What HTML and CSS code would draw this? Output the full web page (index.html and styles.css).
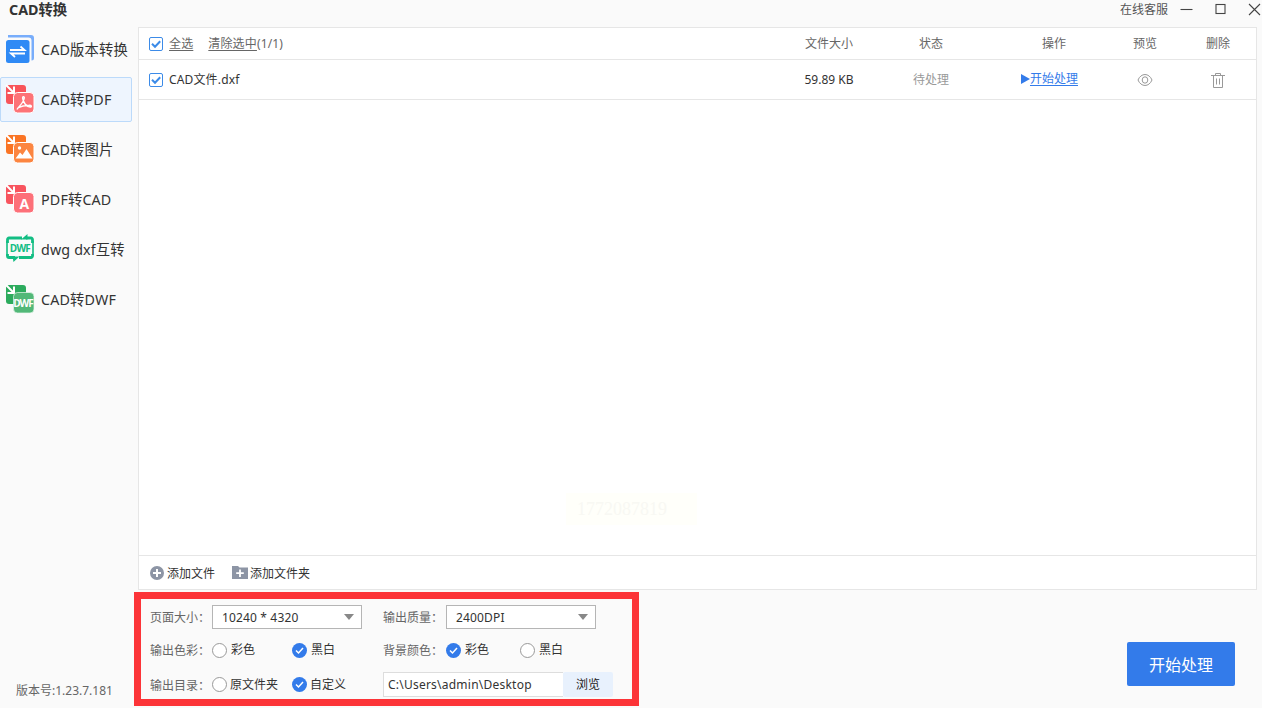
FILE: index.html
```html
<!DOCTYPE html>
<html lang="zh-CN">
<head>
  <meta charset="UTF-8">
  <meta name="viewport" content="width=device-width, initial-scale=1">
  <title>CAD转换</title>
  <link rel="stylesheet" href="styles.css">
</head>
<body>
  <header class="titlebar">
    <h1>CAD转换</h1>
    <span class="service">在线客服</span>
    <svg class="win-btn" width="13" height="13" viewBox="0 0 13 13"><path d="M0.5 6.5h12"/></svg>
    <svg class="win-btn" width="13" height="13" viewBox="0 0 13 13"><rect x="2" y="1.5" width="9" height="9"/></svg>
    <svg class="win-btn" width="13" height="13" viewBox="0 0 13 13"><path d="M1 1l11 11M12 1L1 12"/></svg>
  </header>

  <div class="layout">
    <aside class="sidebar">
      <nav class="menu">
        <a class="menu-item">
          <svg width="28" height="28" viewBox="0 0 28 28">
            <path d="M2 0h23a3 3 0 0 1 3 3v20a2.500 2.500 0 0 1-2.500 2.500V5.500a3 3 0 0 0-3-3H2z" fill="#78adfb"/>
            <rect x="0" y="5" width="23.5" height="23" rx="2.5" fill="#2f8af5"/>
            <path d="M4 15h14.500l-4-3.500M19 18.500H5l4 3.500" fill="none" stroke="#fff" stroke-width="1.8"/>
          </svg>
          <span>CAD版本转换</span>
        </a>
        <a class="menu-item active">
          <svg width="28" height="28" viewBox="0 0 28 28">
            <rect width="20" height="19" rx="3" fill="#f8545a"/>
            <path d="M0 0l7 7M8 1.500V8H1.500" fill="none" stroke="#fff" stroke-width="2"/>
            <rect x="7.500" y="7.500" width="20.500" height="20.500" rx="4" fill="#fd7377" stroke="#fff"/>
            <path d="M11 24.500c2-3.500 6.500-6.500 7.300-11.500.2-2-2.200-1.600-1.600.5 1 4.500 3.500 8 7.500 8.500 2 0 1.300-2-1-1.800-4 .1-8 .8-11.500 2.600" fill="none" stroke="#fff" stroke-width="1.400"/>
          </svg>
          <span>CAD转PDF</span>
        </a>
        <a class="menu-item">
          <svg width="28" height="28" viewBox="0 0 28 28">
            <rect width="20" height="19" rx="3" fill="#fa7424"/>
            <path d="M0 0l7 7M8 1.500V8H1.500" fill="none" stroke="#fff" stroke-width="2"/>
            <rect x="7.500" y="7.500" width="20.500" height="20.500" rx="4" fill="#fc8540" stroke="#fff"/>
            <circle cx="13.500" cy="13" r="1.700" fill="#fff"/>
            <path d="M9.500 23.500l4.500-6 2.500 2.500 4-6 6 9.500z" fill="#fff"/>
          </svg>
          <span>CAD转图片</span>
        </a>
        <a class="menu-item">
          <svg width="28" height="28" viewBox="0 0 28 28">
            <rect width="20" height="19" rx="3" fill="#f8545e"/>
            <path d="M0 0l7 7M8 1.500V8H1.500" fill="none" stroke="#fff" stroke-width="2"/>
            <rect x="7.500" y="7.500" width="20.500" height="20.500" rx="4" fill="#fd7079" stroke="#fff"/>
            <text class="icon-a" x="18.300" y="24" text-anchor="middle">A</text>
          </svg>
          <span>PDF转CAD</span>
        </a>
        <a class="menu-item">
          <svg width="28" height="28" viewBox="0 0 28 28">
            <path d="M1.500 8V4.500a1.500 1.500 0 0 1 1.500-1.500h13M20 3h5a1.500 1.500 0 0 1 1.500 1.500V8M1.500 19v2A1.500 1.500 0 0 0 3 22.500h6M13 22.500h12a1.500 1.500 0 0 0 1.500-1.500v-2" fill="none" stroke="#12bd83" stroke-width="2.800"/>
            <path d="M1 6v15M27 6v15" stroke="#12bd83" stroke-width="1.600"/>
            <path d="M15 4.400L21.500-1v5.400zM6.500 21.500h7L7.500 27z" fill="#12bd83"/>
            <text class="icon-dwf green" x="14.300" y="16.500" text-anchor="middle" textLength="21">DWF</text>
          </svg>
          <span>dwg dxf互转</span>
        </a>
        <a class="menu-item">
          <svg width="28" height="28" viewBox="0 0 28 28">
            <rect width="20" height="19" rx="3" fill="#2cab5d"/>
            <path d="M0 0l7 7M8 1.500V8H1.500" fill="none" stroke="#fff" stroke-width="2"/>
            <rect x="7.500" y="7.500" width="20.500" height="20.500" rx="4" fill="#52b878" stroke="#e9f7ee" stroke-width=".7"/>
            <text class="icon-dwf" x="17.500" y="22" text-anchor="middle" textLength="20.500">DWF</text>
          </svg>
          <span>CAD转DWF</span>
        </a>
      </nav>
      <p class="version">版本号:1.23.7.181</p>
    </aside>

    <main class="main">
      <section class="files">
        <div class="row head">
          <div class="cell name">
            <svg class="check" width="14" height="14" viewBox="0 0 14 14"><rect x=".5" y=".5" width="13" height="13" rx="1.500"/><path d="M3 6.700l3 3 5.200-5.500"/></svg>
            <u>全选</u>
            <span class="clear"><u>清除选中</u>(1/1)</span>
          </div>
          <div class="cell">文件大小</div>
          <div class="cell">状态</div>
          <div class="cell">操作</div>
          <div class="cell">预览</div>
          <div class="cell">删除</div>
        </div>
        <div class="row item">
          <div class="cell name">
            <svg class="check" width="14" height="14" viewBox="0 0 14 14"><rect x=".5" y=".5" width="13" height="13" rx="1.500"/><path d="M3 6.700l3 3 5.200-5.500"/></svg>
            <span>CAD文件.dxf</span>
          </div>
          <div class="cell">59.89 KB</div>
          <div class="cell waiting">待处理</div>
          <div class="cell start">
            <svg width="9" height="10" viewBox="0 0 9 10"><path d="M0 0l9 5-9 5z" fill="#337bea"/></svg>
            <u>开始处理</u>
          </div>
          <div class="cell">
            <svg class="gray-icon" width="16" height="14" viewBox="0 0 16 14"><path d="M1 7c3-7.300 11-7.300 14 0-3 7.300-11 7.300-14 0z"/><ellipse cx="8" cy="7" rx="2.800" ry="3.200"/></svg>
          </div>
          <div class="cell">
            <svg class="gray-icon" width="14" height="16" viewBox="0 0 14 16"><path d="M0 3.500h14M4.500 3.500v-2h5v2M2.500 3.500v12h9v-12M5.500 6.500v6M8.500 6.500v6"/></svg>
          </div>
        </div>
        <div class="list">
          <div class="mark">1772087819</div>
        </div>
        <div class="toolbar">
          <span class="tool">
            <svg width="14" height="14" viewBox="0 0 14 14"><circle cx="7" cy="7" r="7" fill="#8d95a5"/><path d="M7 3v8M3 7h8" stroke="#fff" stroke-width="2"/></svg>
            <span>添加文件</span>
          </span>
          <span class="tool folder">
            <svg width="16" height="13" viewBox="0 0 16 13"><path d="M0 0h6l1.500 1.500H16V13H0z" fill="#8d95a5"/><path d="M8 3.500v7.500M4.200 7.200h7.600" stroke="#fff" stroke-width="1.800"/></svg>
            <span>添加文件夹</span>
          </span>
        </div>
      </section>

      <section class="settings">
        <div class="form">
          <label>页面大小：</label>
          <div class="select"><span>10240 * 4320</span><i class="arrow"></i></div>
          <label>输出质量：</label>
          <div class="select"><span>2400DPI</span><i class="arrow"></i></div>

          <label>输出色彩：</label>
          <div class="radios">
            <span class="radio"><i class="dot"></i>彩色</span>
            <span class="radio"><i class="dot on"><svg width="15" height="15" viewBox="0 0 15 15"><path d="M4 7.500l2.500 2.500 4.500-5"/></svg></i>黑白</span>
          </div>
          <label>背景颜色：</label>
          <div class="radios narrow">
            <span class="radio"><i class="dot on"><svg width="15" height="15" viewBox="0 0 15 15"><path d="M4 7.500l2.500 2.500 4.500-5"/></svg></i>彩色</span>
            <span class="radio"><i class="dot"></i>黑白</span>
          </div>

          <label>输出目录：</label>
          <div class="radios last">
            <span class="radio"><i class="dot"></i>原文件夹</span>
            <span class="radio"><i class="dot on"><svg width="15" height="15" viewBox="0 0 15 15"><path d="M4 7.500l2.500 2.500 4.500-5"/></svg></i>自定义</span>
          </div>
          <div class="path">
            <div class="path-text">C:\Users\admin\Desktop</div>
            <button class="browse">浏览</button>
          </div>
        </div>
        <button class="submit">开始处理</button>
        <div class="highlight"></div>
      </section>
    </main>
  </div>
</body>
</html>
```
FILE: styles.css
```css
* {
  box-sizing: border-box;
}
body {
  margin: 0;
  width: 1262px;
  height: 708px;
  overflow: hidden;
  background: #fafafa;
  color: #333;
  font-family: "Noto Sans", "Noto Sans CJK SC", sans-serif;
  font-size: 12px;
  line-height: 18px;
  display: flex;
  flex-direction: column;
}
h1, p {
  margin: 0;
}
u {
  text-underline-offset: 2px;
}
svg {
  display: block;
  flex: none;
  overflow: visible;
}
button {
  border: 0;
  padding: 0;
  font-family: inherit;
}

/* title bar */
.titlebar {
  height: 27px;
  padding: 0 1px 8px 9px;
  display: flex;
  align-items: center;
}
.titlebar h1 {
  font-size: 14.3px;
  line-height: 18px;
  margin-right: auto;
}
.service {
  color: #555;
  margin-right: 12px;
}
.win-btn {
  fill: none;
  stroke: #444;
  stroke-width: 1.1;
  margin-right: 21px;
}
.win-btn:last-child {
  margin-right: 0;
}

.layout {
  flex: 1;
  min-height: 0;
  display: flex;
}

/* left menu */
.sidebar {
  width: 138px;
  display: flex;
  flex-direction: column;
  justify-content: space-between;
}
.menu {
  display: flex;
  flex-direction: column;
  gap: 5px;
}
.menu-item {
  width: 132px;
  height: 45px;
  padding-left: 5px;
  border: 1px solid transparent;
  display: flex;
  align-items: center;
  gap: 7px;
  font-size: 14.3px;
  letter-spacing: 0.15px;
  white-space: nowrap;
}
.menu-item svg {
  margin-bottom: 1px;
  letter-spacing: 0;
}
.menu-item.active {
  background: #eef5fe;
  border-color: #bcdafa;
  border-radius: 2px;
}
.icon-a {
  font: bold 14px "Open Sans", sans-serif;
  fill: #fff;
}
.icon-dwf {
  font: bold 10px "Open Sans", sans-serif;
  fill: #fff;
}
.icon-dwf.green {
  fill: #12bd83;
}
.version {
  padding: 0 0 8px 16px;
  color: #666;
}

/* file table */
.main {
  flex: 1;
  display: flex;
  flex-direction: column;
}
.files {
  width: 1119px;
  height: 563px;
  background: #fff;
  border: 1px solid #e6e6e6;
  display: flex;
  flex-direction: column;
}
.row {
  display: grid;
  grid-template-columns: 655px 70px 134px 112px 70px 76px;
  align-items: center;
  border-bottom: 1px solid #e6e6e6;
}
.row.head {
  height: 32px;
  padding-top: 1px;
  color: #666;
}
.row.item {
  height: 40px;
}
.cell {
  display: flex;
  align-items: center;
  justify-content: center;
  white-space: nowrap;
}
.cell.name {
  justify-content: flex-start;
  padding-left: 10px;
  gap: 6px;
  letter-spacing: 0.15px;
}
.clear {
  margin-left: 9px;
}
.waiting {
  color: #999;
}
.start {
  padding-right: 9px;
  padding-bottom: 1px;
  color: #337bea;
}
.check {
  fill: #fff;
  stroke: #3c8be8;
}
.check path {
  fill: none;
  stroke-width: 2;
}
.gray-icon {
  fill: none;
  stroke: #999;
}
.list {
  flex: 1;
  position: relative;
}
.mark {
  position: absolute;
  left: 427px;
  top: 393px;
  width: 131px;
  height: 32px;
  padding-left: 11px;
  background: #fffffa;
  color: #f8f8f3;
  font: 18px/32px "Liberation Serif", serif;
}
.toolbar {
  height: 34px;
  padding-left: 11px;
  border-top: 1px solid #e6e6e6;
  display: flex;
  align-items: center;
  gap: 17px;
}
.tool {
  display: flex;
  align-items: center;
  gap: 3px;
}
.tool.folder {
  gap: 2px;
}
.tool span {
  padding-top: 2px;
}

/* output settings */
.settings {
  flex: 1;
  position: relative;
  display: flex;
  justify-content: space-between;
  padding: 12px 27px 0 12px;
}
.form {
  display: grid;
  grid-template-columns: 62px 171px 63px 168px;
  grid-template-rows: 30px 36px 34px;
  align-items: center;
}
.form label {
  padding-top: 2px;
  color: #666;
  white-space: nowrap;
}
.select {
  width: 150px;
  height: 24px;
  padding: 0 7px 0 9px;
  background: #fff;
  border: 1px solid #b5b5b5;
  display: flex;
  align-items: center;
  justify-content: space-between;
  letter-spacing: 0.15px;
}
.select span {
  padding-top: 2px;
}
.arrow {
  border: 5.5px solid transparent;
  border-top: 6px solid #888;
  border-bottom: 0;
}
.radios {
  display: grid;
  grid-template-columns: 80px auto;
  justify-content: start;
}
.radios.narrow {
  grid-template-columns: 74px auto;
}
.radios.last {
  margin-bottom: 1px;
}
.radio {
  display: flex;
  align-items: center;
  gap: 4px;
  white-space: nowrap;
}
.last .radio {
  gap: 3px;
}
.dot {
  width: 15px;
  height: 15px;
  background: #fff;
  border: 1px solid #999;
  border-radius: 50%;
}
.dot.on {
  background: #337bea;
  border: 0;
}
.dot svg {
  fill: none;
  stroke: #fff;
  stroke-width: 1.5;
}
.path {
  grid-column: 3 / 5;
  width: 230px;
  height: 25px;
  margin-bottom: 2px;
  display: flex;
}
.path-text {
  flex: 1;
  padding-left: 4px;
  line-height: 23px;
  letter-spacing: 0.23px;
  background: #fff;
  border: 1px solid #ddd;
  border-right: 0;
}
.browse {
  width: 50px;
  background: #e8f1fd;
  color: #222;
  font-size: 12px;
  border-radius: 2px;
}
.submit {
  width: 108px;
  height: 44px;
  margin-top: 40px;
  background: #337bea;
  color: #fff;
  font-size: 16px;
  border-radius: 2px;
}
.highlight {
  position: absolute;
  left: -4px;
  top: 2px;
  width: 505px;
  height: 114px;
  border: 7px solid #fc3438;
}
```
